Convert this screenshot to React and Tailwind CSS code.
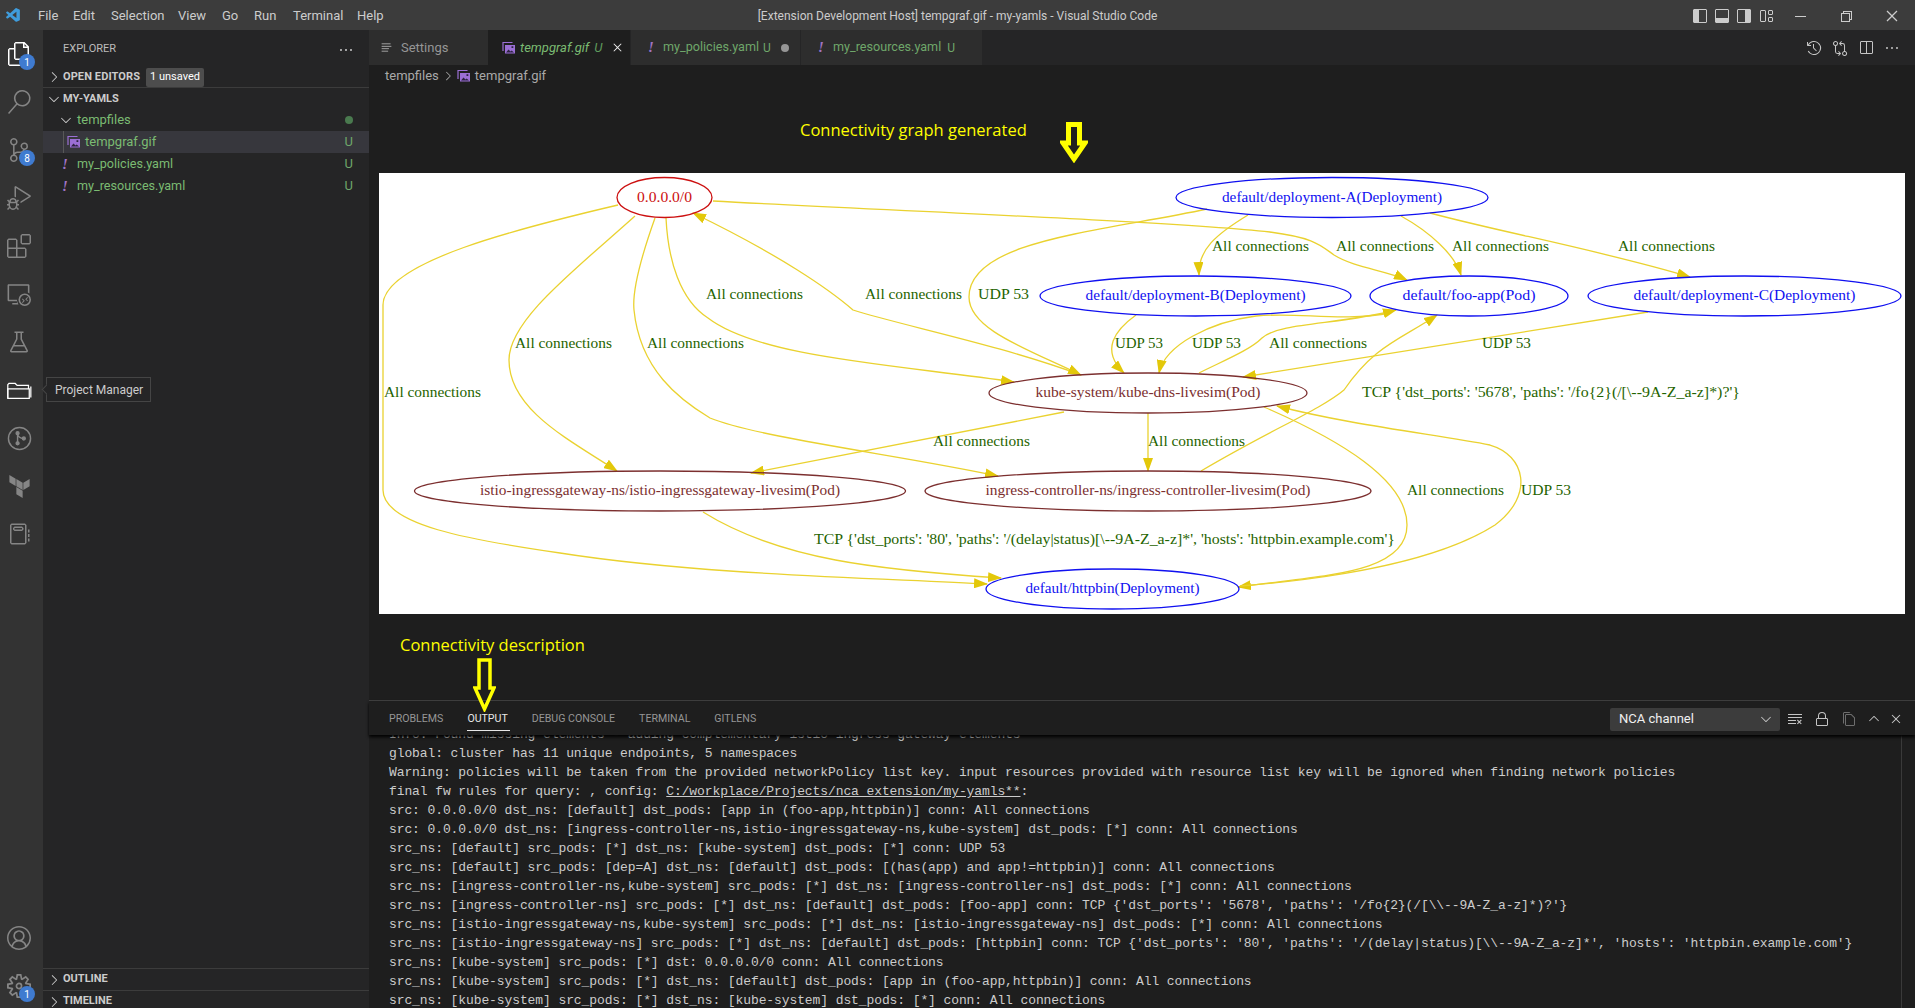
import {
  VscVscode, VscFiles, VscSearch, VscSourceControl, VscDebugAlt, VscExtensions, VscRemoteExplorer, VscBeaker,
  VscNotebook, VscAccount, VscSettingsGear, VscChevronRight, VscChevronDown, VscChevronUp, VscEllipsis, VscClose,
  VscLayoutSidebarLeft, VscLayoutPanel, VscLayoutSidebarRight, VscLayout, VscChromeMinimize, VscChromeRestore,
  VscChromeClose, VscHistory, VscGitCompare, VscSplitHorizontal, VscClearAll, VscLock, VscListFlat, VscCopy,
} from "react-icons/vsc";
import { SiTerraform } from "react-icons/si";

const UI = { fontFamily: "Roboto, sans-serif" };

const menuItems = [
  ["File", "w-[35px]"],
  ["Edit", "w-[38px]"],
  ["Selection", "w-[67px]"],
  ["View", "w-[44px]"],
  ["Go", "w-[32px]"],
  ["Run", "w-[39px]"],
  ["Terminal", "w-[64px]"],
  ["Help", "w-[40px]"],
];

const outputLines = [
  "Info: Found missing elements - adding complementary istio-ingress-gateway elements",
  "global: cluster has 11 unique endpoints, 5 namespaces",
  "Warning: policies will be taken from the provided networkPolicy list key. input resources provided with resource list key will be ignored when finding network policies",
  null,
  "src: 0.0.0.0/0 dst_ns: [default] dst_pods: [app in (foo-app,httpbin)] conn: All connections",
  "src: 0.0.0.0/0 dst_ns: [ingress-controller-ns,istio-ingressgateway-ns,kube-system] dst_pods: [*] conn: All connections",
  "src_ns: [default] src_pods: [*] dst_ns: [kube-system] dst_pods: [*] conn: UDP 53",
  "src_ns: [default] src_pods: [dep=A] dst_ns: [default] dst_pods: [(has(app) and app!=httpbin)] conn: All connections",
  "src_ns: [ingress-controller-ns,kube-system] src_pods: [*] dst_ns: [ingress-controller-ns] dst_pods: [*] conn: All connections",
  "src_ns: [ingress-controller-ns] src_pods: [*] dst_ns: [default] dst_pods: [foo-app] conn: TCP {'dst_ports': '5678', 'paths': '/fo{2}(/[\\\\--9A-Z_a-z]*)?'}",
  "src_ns: [istio-ingressgateway-ns,kube-system] src_pods: [*] dst_ns: [istio-ingressgateway-ns] dst_pods: [*] conn: All connections",
  "src_ns: [istio-ingressgateway-ns] src_pods: [*] dst_ns: [default] dst_pods: [httpbin] conn: TCP {'dst_ports': '80', 'paths': '/(delay|status)[\\\\--9A-Z_a-z]*', 'hosts': 'httpbin.example.com'}",
  "src_ns: [kube-system] src_pods: [*] dst: 0.0.0.0/0 conn: All connections",
  "src_ns: [kube-system] src_pods: [*] dst_ns: [default] dst_pods: [app in (foo-app,httpbin)] conn: All connections",
  "src_ns: [kube-system] src_pods: [*] dst_ns: [kube-system] dst_pods: [*] conn: All connections",
];

// graph coordinates below are page pixels, the svg viewBox starts at the image corner
const edges = [
  "M713,201 C880,210 1180,222 1270,232 C1315,238 1320,245 1334,255 C1355,268 1385,270 1407,280",
  "M618,205 C520,228 383,262 383,305 L383,490 C383,525 470,540 560,553 C700,575 880,578 987,584",
  "M635,216 C575,270 509,320 509,360 C509,410 570,440 617,471",
  "M655,218 C640,260 632,290 634,310 C640,370 680,400 710,418 C760,438 900,455 998,476",
  "M666,218 C668,260 680,300 708,318 C760,358 900,365 1014,382",
  "M1081,375 C1000,345 900,325 853,310 C830,290 780,255 693,213",
  "M1207,209 C1100,232 969,240 969,297 C969,330 1030,350 1081,375",
  "M1248,215 C1215,235 1198,250 1199,275",
  "M1401,216 C1430,232 1455,255 1461,275",
  "M1430,213 C1500,232 1600,250 1690,277",
  "M1136,315 C1115,330 1100,350 1124,373",
  "M1391,313 C1340,322 1300,312 1256,316 C1210,322 1165,345 1159,373",
  "M1199,373 C1225,360 1250,350 1262,338 C1280,322 1340,325 1396,310",
  "M1648,312 L1243,377",
  "M1201,471 C1270,430 1320,410 1344,390 C1375,345 1400,340 1437,315",
  "M1064,412 L751,473",
  "M1148,413 L1148,471",
  "M1264,407 C1340,440 1407,480 1407,525 C1407,575 1320,575 1238,587",
  "M1240,586 C1340,578 1440,560 1495,525 C1535,495 1525,455 1490,445 C1440,435 1350,425 1277,406",
  "M703,512 C780,560 880,570 1001,578",
];

const nodes = [
  { cx: 664.5, cy: 197.5, rx: 47.5, ry: 20, w: 55, c: "#cc1010", t: "0.0.0.0/0" },
  { cx: 1332, cy: 197.5, rx: 156, ry: 20, w: 220, c: "#1010f0", t: "default/deployment-A(Deployment)" },
  { cx: 1195.5, cy: 296, rx: 155.5, ry: 20, w: 220, c: "#1010f0", t: "default/deployment-B(Deployment)" },
  { cx: 1469, cy: 296, rx: 99, ry: 20, w: 133, c: "#1010f0", t: "default/foo-app(Pod)" },
  { cx: 1744.5, cy: 296, rx: 156.5, ry: 20, w: 222, c: "#1010f0", t: "default/deployment-C(Deployment)" },
  { cx: 1148, cy: 393, rx: 159, ry: 20, w: 225, c: "#7c2f2f", t: "kube-system/kube-dns-livesim(Pod)" },
  { cx: 660, cy: 491, rx: 245.5, ry: 20, w: 360, c: "#7c2f2f", t: "istio-ingressgateway-ns/istio-ingressgateway-livesim(Pod)" },
  { cx: 1148, cy: 491, rx: 223, ry: 20, w: 325, c: "#7c2f2f", t: "ingress-controller-ns/ingress-controller-livesim(Pod)" },
  { cx: 1112.5, cy: 589, rx: 126.5, ry: 20, w: 174, c: "#1010f0", t: "default/httpbin(Deployment)" },
];

const ALL = "All connections";
const labels = [
  [1212, 246, 97, ALL],
  [1336, 246, 98, ALL],
  [1452, 246, 97, ALL],
  [1618, 246, 97, ALL],
  [706, 294, 97, ALL],
  [865, 294, 97, ALL],
  [978, 294, 51, "UDP 53"],
  [515, 343, 97, ALL],
  [647, 343, 97, ALL],
  [1115, 343, 48, "UDP 53"],
  [1192, 343, 49, "UDP 53"],
  [1269, 343, 98, ALL],
  [1482, 343, 49, "UDP 53"],
  [384, 392, 97, ALL],
  [1362, 392, 378, "TCP {'dst_ports': '5678', 'paths': '/fo{2}(/[\\--9A-Z_a-z]*)?'}"],
  [933, 441, 97, ALL],
  [1148, 441, 97, ALL],
  [1407, 490, 97, ALL],
  [1521, 490, 50, "UDP 53"],
  [814, 539, 581, "TCP {'dst_ports': '80', 'paths': '/(delay|status)[\\--9A-Z_a-z]*', 'hosts': 'httpbin.example.com'}"],
];

function ImageIcon({ className = "w-[14px] h-[14px]" }) {
  return (
    <svg viewBox="0 0 14 14" className={className}>
      <path d="M1 10V1.5h9.5" fill="none" stroke="#9b6fd4" strokeWidth="1.2" />
      <rect x="3" y="4" width="10" height="8.5" fill="#9b6fd4" />
      <path d="M4 11.5l2.5-3 2 2 1.2-1 2.3 2z" fill="#2d2340" />
      <rect x="9.5" y="5.2" width="1.8" height="1.8" fill="#2d2340" />
    </svg>
  );
}

function ProjectIcon() {
  return (
    <svg viewBox="0 0 32 24" className="w-[25px] h-[19px]" fill="none" stroke="#fff" strokeWidth="1.6">
      <path d="M1 22V4.5L2.5 3h8L13 5.5h14.5V10" />
      <path d="M1 10h27.5v12H1z" />
      <path d="M30.5 7v14" />
    </svg>
  );
}

function GitGraphIcon() {
  return (
    <svg viewBox="0 0 26 26" className="w-[25px] h-[25px]" fill="none" stroke="#858585" strokeWidth="1.5">
      <circle cx="13" cy="13" r="11.5" />
      <path d="M11 7v11M11 9c1 2.500 3 3.500 6 4" />
      <circle cx="11" cy="7.500" r="1.500" fill="#858585" />
      <circle cx="11" cy="18" r="1.500" fill="#858585" />
      <circle cx="17.500" cy="13" r="1.500" fill="#858585" />
    </svg>
  );
}

function ActivityItem({ children, badge }) {
  return (
    <div className="relative h-12 w-[38px] shrink-0 flex items-center justify-center text-[#858585]">
      {children}
      {badge && (
        <span className="absolute left-[19px] top-[24px] flex items-center justify-center w-4 h-4 rounded-full bg-[#3f7bd0] text-white text-[10px]">
          {badge}
        </span>
      )}
    </div>
  );
}

function ActivityBar() {
  return (
    <div className="w-[43px] shrink-0 bg-[#333333] flex flex-col">
      <ActivityItem badge="1"><VscFiles size={24} color="#ffffff" /></ActivityItem>
      <ActivityItem><VscSearch size={24} /></ActivityItem>
      <ActivityItem badge="8"><VscSourceControl size={24} /></ActivityItem>
      <ActivityItem><VscDebugAlt size={24} /></ActivityItem>
      <ActivityItem><VscExtensions size={24} /></ActivityItem>
      <ActivityItem><VscRemoteExplorer size={24} /></ActivityItem>
      <ActivityItem><VscBeaker size={24} /></ActivityItem>
      <ActivityItem><ProjectIcon /></ActivityItem>
      <ActivityItem><GitGraphIcon /></ActivityItem>
      <ActivityItem><SiTerraform size={23} /></ActivityItem>
      <ActivityItem><VscNotebook size={24} /></ActivityItem>
      <div className="mt-auto -mb-[2px]">
        <ActivityItem><VscAccount size={24} /></ActivityItem>
        <ActivityItem badge="1"><VscSettingsGear size={24} /></ActivityItem>
      </div>
    </div>
  );
}

function TreeRow({ indent, active, children, git }) {
  return (
    <div className={`relative h-[22px] flex items-center text-[13px] text-[#7bbb72] ${indent} ${active ? "bg-[#37373d]" : ""}`}>
      {active && <span className="absolute left-[20px] top-0 bottom-0 w-px bg-[#585858]" />}
      {children}
      {git}
    </div>
  );
}

const GitU = () => <span className="ml-auto mr-[16px] text-[13px] text-[#6fa76a]">U</span>;
const YamlBang = () => <span className="w-[12px] text-[15px] font-bold italic text-[#a074c4] text-center" style={{ fontFamily: "Liberation Serif, serif" }}>!</span>;

function Sidebar() {
  return (
    <div className="w-[326px] shrink-0 bg-[#252526] flex flex-col text-[#cccccc]">
      <div className="h-[35px] pl-[20px] pr-[15px] flex items-center justify-between text-[11px] text-[#bbbbbb] mt-[2px]">
        <span>EXPLORER</span>
        <VscEllipsis size={16} color="#cccccc" />
      </div>
      <div className="h-[21px] flex items-center border-b border-[#3c3c3c] text-[11px] font-bold">
        <VscChevronRight size={16} className="ml-[3px]" />
        <span className="ml-[1px] tracking-[0.1px]">OPEN EDITORS</span>
        <span className="ml-[6px] h-[19px] px-[4px] rounded-[2px] bg-[#4d4d4d] text-white font-normal flex items-center text-[11px]">1 unsaved</span>
      </div>
      <div className="h-[22px] flex items-center text-[11px] font-bold pl-[3px] shrink-0">
        <VscChevronDown size={16} />
        <span className="ml-[1px]">MY-YAMLS</span>
      </div>
      <TreeRow indent="pl-[15px] -mt-px" git={<span className="ml-auto mr-[16px] w-2 h-2 rounded-full bg-[#4a7a4f]" />}>
        <VscChevronDown size={16} color="#cccccc" />
        <span className="ml-[3px]">tempfiles</span>
      </TreeRow>
      <TreeRow indent="pl-[24px]" active git={<GitU />}>
        <ImageIcon />
        <span className="ml-[4px]">tempgraf.gif</span>
      </TreeRow>
      <TreeRow indent="pl-[16px]" git={<GitU />}>
        <YamlBang />
        <span className="ml-[6px] text-[12.6px]">my_policies.yaml</span>
      </TreeRow>
      <TreeRow indent="pl-[16px]" git={<GitU />}>
        <YamlBang />
        <span className="ml-[6px] text-[12.6px]">my_resources.yaml</span>
      </TreeRow>
      <div className="mt-auto border-t border-[#3c3c3c] h-[22px] flex items-center text-[11px] font-bold pl-[3px]">
        <VscChevronRight size={16} />
        <span className="ml-[1px]">OUTLINE</span>
      </div>
      <div className="-mb-[4px] border-t border-[#3c3c3c] h-[22px] flex items-center text-[11px] font-bold pl-[3px]">
        <VscChevronRight size={16} />
        <span className="ml-[1px]">TIMELINE</span>
      </div>
    </div>
  );
}

function Tabs() {
  return (
    <div className="h-[35px] shrink-0 bg-[#252526] flex items-center text-[13px]">
      <div className="w-[119px] h-full bg-[#2d2d2d] flex items-center pl-[11px] text-[#969696]">
        <VscListFlat size={13} color="#bbbbbb" />
        <span className="ml-[8px]">Settings</span>
      </div>
      <div className="w-[142px] h-full bg-[#1e1e1e] flex items-center pl-[14px] text-[#7bbb72]">
        <ImageIcon />
        <span className="ml-[4px] italic">tempgraf.gif</span>
        <span className="ml-[5px] italic text-[#5f9a5c]">U</span>
        <VscClose size={15} color="#eeeeee" className="ml-[8px]" />
      </div>
      <div className="w-[170px] h-full bg-[#2d2d2d] border-l border-[#252526] flex items-center pl-[14px] text-[#6fa76a]">
        <YamlBang />
        <span className="ml-[6px] text-[12.6px]">my_policies.yaml</span>
        <span className="ml-[4px] text-[12px]">U</span>
        <span className="ml-[10px] w-2 h-2 rounded-full bg-[#969696]" />
      </div>
      <div className="w-[182px] h-full bg-[#2d2d2d] border-l border-[#252526] flex items-center pl-[14px] text-[#6fa76a]">
        <YamlBang />
        <span className="ml-[6px] text-[12.6px]">my_resources.yaml</span>
        <span className="ml-[6px] text-[12px]">U</span>
      </div>
      <div className="ml-auto pr-[10px] flex items-center text-[#c5c5c5]">
        <span className="w-[26px] flex justify-center"><VscHistory size={16} /></span>
        <span className="w-[26px] flex justify-center"><VscGitCompare size={16} /></span>
        <span className="w-[26px] flex justify-center"><VscSplitHorizontal size={16} /></span>
        <span className="w-[26px] flex justify-center"><VscEllipsis size={16} /></span>
      </div>
    </div>
  );
}

function Graph() {
  return (
    <svg viewBox="379 173 1526 441" className="block w-[1526px] h-[441px] bg-white">
      <defs>
        <marker id="arrow" viewBox="0 0 14 10" refX="13" refY="5" markerWidth="14" markerHeight="10" markerUnits="userSpaceOnUse" orient="auto">
          <path d="M0,0 L14,5 L0,10 z" fill="#e3c80a" />
        </marker>
      </defs>
      {edges.map((d, i) => (
        <path key={i} d={d} fill="none" stroke="#ead230" strokeWidth="1.3" markerEnd="url(#arrow)" />
      ))}
      {nodes.map((n) => (
        <g key={n.t}>
          <ellipse cx={n.cx} cy={n.cy} rx={n.rx} ry={n.ry} fill="none" stroke={n.c} strokeWidth="1.3" />
          <text
            x={n.cx - n.w / 2}
            y={n.cy + 4}
            textLength={n.w}
            lengthAdjust="spacingAndGlyphs"
            fontSize="15"
            fill={n.c}
            style={{ fontFamily: "Liberation Serif, serif" }}
          >
            {n.t}
          </text>
        </g>
      ))}
      {labels.map(([x, y, w, t]) => (
        <text
          key={`${x}-${y}`}
          x={x}
          y={y + 5}
          textLength={w}
          lengthAdjust="spacingAndGlyphs"
          fontSize="15"
          fill="#1f6400"
          style={{ fontFamily: "Liberation Serif, serif" }}
        >
          {t}
        </text>
      ))}
    </svg>
  );
}

function OutputLine({ text }) {
  if (text === null) {
    return (
      <div>
        final fw rules for query: , config: <span className="underline">C:/workplace/Projects/nca_extension/my-yamls**</span>:
      </div>
    );
  }
  return <div>{text}</div>;
}

function Panel() {
  return (
    <div className="h-[308px] shrink-0 border-t border-[#414141] bg-[#1e1e1e] flex flex-col">
      <div className="relative z-10 h-[34px] shrink-0 flex items-center pl-[20px] pt-[2px] shadow-[0_2px_3px_#000000] bg-[#1e1e1e] text-[10.6px] text-[#969696]">
        <div className="flex gap-6">
          <span>PROBLEMS</span>
          <span className="relative text-[#e7e7e7]">
            OUTPUT
            <span className="absolute left-0 -right-[2px] top-[19px] h-px bg-[#e7e7e7]" />
          </span>
          <span>DEBUG CONSOLE</span>
          <span>TERMINAL</span>
          <span>GITLENS</span>
        </div>
        <div className="ml-auto flex items-center text-[#c5c5c5] pr-[9px]">
          <div className="w-[170px] h-[23px] mr-[2px] rounded-[2px] bg-[#3c3c3c] flex items-center justify-between pl-[9px] pr-[6px] text-[13px] text-[#f0f0f0]">
            <span>NCA channel</span>
            <VscChevronDown size={16} color="#c5c5c5" />
          </div>
          <span className="w-[26px] flex justify-center"><VscClearAll size={16} /></span>
          <span className="w-[27px] flex justify-center"><VscLock size={16} /></span>
          <span className="w-[27px] flex justify-center text-[#6e6e6e]"><VscCopy size={16} /></span>
          <span className="w-[23px] flex justify-center"><VscChevronUp size={16} /></span>
          <span className="w-[21px] flex justify-center"><VscClose size={16} /></span>
        </div>
      </div>
      <div className="relative flex-1 min-h-0 overflow-hidden pl-[20px] text-[#cccccc]">
        <div
          className="-mt-[10px] text-[13px] leading-[19px] tracking-[-0.1px] whitespace-pre"
          style={{ fontFamily: "Liberation Mono, monospace" }}
        >
          {outputLines.map((l, i) => (
            <OutputLine key={i} text={l} />
          ))}
        </div>
        <span className="absolute right-[13px] top-0 bottom-0 w-px bg-[#3a3a3a]" />
      </div>
    </div>
  );
}

export default function App() {
  return (
    <div className="relative h-screen w-full flex flex-col overflow-hidden bg-[#1e1e1e]" style={UI}>
      {/* title bar */}
      <div className="h-[30px] shrink-0 pt-px bg-[#3c3c3c] grid grid-cols-[1fr_auto_1fr] items-center text-[#cccccc]">
        <div className="flex items-center">
          <span className="w-[38px] pl-[5px]"><VscVscode size={17} color="#3f9cdc" /></span>
          {menuItems.map(([m, w]) => (
            <span key={m} className={`text-[13px] ${w}`}>{m}</span>
          ))}
        </div>
        <div className="text-[12px]">[Extension Development Host] tempgraf.gif - my-yamls - Visual Studio Code</div>
        <div className="flex items-center justify-end">
          <span className="w-[22px] flex justify-center"><VscLayoutSidebarLeft size={16} /></span>
          <span className="w-[22px] flex justify-center"><VscLayoutPanel size={16} /></span>
          <span className="w-[22px] flex justify-center"><VscLayoutSidebarRight size={16} /></span>
          <span className="w-[22px] flex justify-center"><VscLayout size={16} /></span>
          <span className="w-[46px] flex justify-center"><VscChromeMinimize size={16} /></span>
          <span className="w-[46px] flex justify-center"><VscChromeRestore size={16} /></span>
          <span className="w-[46px] flex justify-center"><VscChromeClose size={16} /></span>
        </div>
      </div>

      <div className="flex flex-1 min-h-0">
        <ActivityBar />
        <Sidebar />
        <div className="flex-1 min-w-0 flex flex-col">
          <Tabs />
          <div className="h-[22px] shrink-0 flex items-center pl-[16px] text-[13px] text-[#a9a9a9]">
            <span>tempfiles</span>
            <VscChevronRight size={14} className="mx-[2px]" />
            <ImageIcon />
            <span className="ml-[4px]">tempgraf.gif</span>
          </div>
          <div className="relative flex-1 min-h-0 pl-[10px] pt-[86px]">
            <Graph />
            {/* annotations pasted over the screenshot */}
            <span className="absolute left-[431px] top-[31px] text-[16.500px] text-[#ffff00]" style={{ fontFamily: "Open Sans, sans-serif" }}>Connectivity graph generated</span>
            <svg viewBox="0 0 28 41" className="absolute left-[691px] top-[35px] w-[28px] h-[41px]" fill="none" stroke="#ffff00" strokeWidth="5">
              <path d="M8.500 2.500H19.500V21H25L14 37L3 21H8.500Z" />
            </svg>
            <span className="absolute left-[31px] top-[546px] text-[16.500px] text-[#ffff00]" style={{ fontFamily: "Open Sans, sans-serif" }}>Connectivity description</span>
          </div>
          <Panel />
        </div>
      </div>

      {/* arrow over the panel tabs */}
      <svg viewBox="0 0 23 54" className="absolute left-[473px] top-[658px] z-20 w-[23px] h-[54px]" fill="none" stroke="#ffff00" strokeWidth="3.500">
        <path d="M6 2H17V30H21L11.500 51L2 30H6Z" />
      </svg>

      {/* tooltip */}
      <div className="absolute left-[46px] top-[377px] z-20 h-[25px] w-[105px] flex items-center pl-[8px] bg-[#252526] border border-[#454545] text-[12px] text-[#cccccc]">
        <span className="absolute -left-[4px] top-[8px] w-[7px] h-[7px] rotate-45 bg-[#252526] border-l border-b border-[#454545]" />
        Project Manager
      </div>
    </div>
  );
}
